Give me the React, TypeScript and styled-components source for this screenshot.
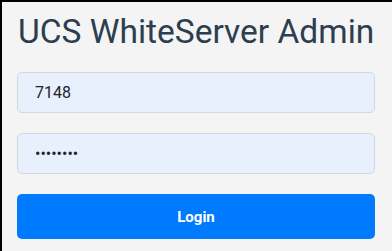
import { useState } from "react";
import styled, { createGlobalStyle } from "styled-components";

const GlobalStyle = createGlobalStyle`
  html, body {
    margin: 0;
    padding: 0;
    background: #f4f4f4;
  }
  body {
    font-family: Roboto, "Liberation Sans", sans-serif;
  }
`;

export default function App() {
  const [user, setUser] = useState("7148");
  const [pass, setPass] = useState("12345678");

  return (
    <>
      <GlobalStyle />
      <Page>
        <Title>UCS WhiteServer Admin</Title>
        <Form onSubmit={(e) => e.preventDefault()}>
          <Field value={user} onChange={(e) => setUser(e.target.value)} />
          <Field
            type="password"
            value={pass}
            onChange={(e) => setPass(e.target.value)}
          />
          <LoginButton type="submit">Login</LoginButton>
        </Form>
      </Page>
    </>
  );
}

const Page = styled.div`
  box-sizing: border-box;
  height: 251px;
  width: 392px;
  border-top: 2px solid #000;
  border-left: 2px solid #000;
  background: #f4f4f4;
  padding: 10px 17px 0 15px;
`;

const Title = styled.h1`
  margin: 0;
  font-size: 33.5px;
  font-weight: 400;
  line-height: 39px;
  color: #2c3e50;
  padding-left: 1px;
`;

const Form = styled.form`
  display: flex;
  flex-direction: column;
  gap: 20px;
  margin-top: 21px;
`;

const Field = styled.input`
  box-sizing: border-box;
  width: 100%;
  height: 41px;
  padding: 0 17px;
  border: 1px solid #d3d8de;
  border-radius: 5px;
  background: #e8f0fe;
  font-family: Roboto, "Liberation Sans", sans-serif;
  font-size: 16px;
  color: #212529;
  outline: none;
`;

const LoginButton = styled.button`
  box-sizing: border-box;
  width: 100%;
  height: 45px;
  border: none;
  border-radius: 5px;
  background: #007bff;
  color: #fff;
  font-family: Roboto, "Liberation Sans", sans-serif;
  font-size: 15px;
  font-weight: 700;
  cursor: pointer;
`;
